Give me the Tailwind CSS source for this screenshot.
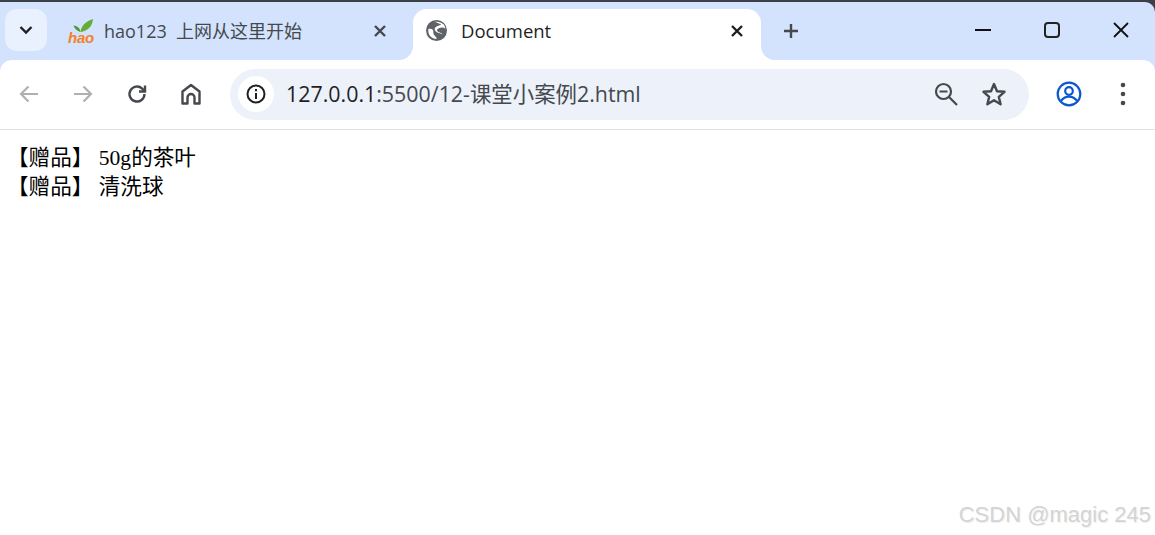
<!DOCTYPE html>
<html lang="zh">
<head>
<meta charset="utf-8">
<title>Document</title>
<script src="https://cdn.jsdelivr.net/npm/@tailwindcss/browser@4"></script>
</head>
<body class="bg-white overflow-hidden">
<div class="relative w-[1155px] h-[535px] overflow-hidden bg-white font-['Open_Sans','Noto_Sans_CJK_SC',sans-serif]">
  <!-- Tab strip -->
  <div class="bg-[#3c3f46] h-[60px] pt-[2px]">
    <div class="h-[58px] bg-[#d3e3fd] rounded-tr-[10px] flex items-start pl-[5px] pt-[7px]">
      <button class="w-[42px] h-[42px] rounded-[12px] bg-[#e9f0fe] flex items-center justify-center shrink-0">
        <svg width="16" height="16" viewBox="0 0 16 16" fill="none" stroke="#1f1f1f" stroke-width="2.400"><path d="M2.500 5 8 10.500 13.500 5"/></svg>
      </button>
      <div class="w-[358px] ml-[8px] h-[44px] flex items-center pl-[13px] pr-[25px] shrink-0">
        <div class="relative w-[26px] h-[26px] shrink-0">
          <svg class="absolute left-0 top-0" width="26" height="18" viewBox="0 0 26 18">
            <path d="M12.500 14C9 13 6.500 10.500 5.500 7.500 9 7.800 12 10 12.500 14Z" fill="#4d9a2e"/>
            <path d="M12.500 14C13 8 18 3 25 1c-.5 7-5 12-12.500 13Z" fill="#66ad34"/>
          </svg>
          <span class="absolute left-0 top-[13px] text-[15px] leading-[14px] italic font-bold tracking-[-0.2px] text-[#f4812a] font-['Liberation_Sans',sans-serif]">hao</span>
        </div>
        <span class="ml-[10px] text-[18px] leading-[24px] text-[#45484d] whitespace-pre flex-1">hao123  上网从这里开始</span>
        <svg class="-ml-[1px] mr-[1px]" width="14" height="14" viewBox="0 0 14 14" fill="none" stroke="#45484d" stroke-width="2.400"><path d="M2 2l10 10M12 2 2 12"/></svg>
      </div>
      <div class="relative w-[348px] h-[51px] bg-white rounded-t-[14px] flex items-center pl-[13px] pr-[17px] pb-[7px] shrink-0">
        <svg width="21" height="21" viewBox="0 0 22 22" class="shrink-0 mb-[2px]"><circle cx="11" cy="11" r="11" fill="#5f6368"/><path d="M9 1.500c3 .2 6 .5 9 2.800 1.500 1.500 2 3 2.200 4.700-1.200-.7-2.500-1.500-4.500-1-2.200.4-3.700 1-4.200 2.300-.4 1.200 1.200 2.100 3 2.800 1.700.7 2.600 1.300 3 2.200-1.300-1-3.500-1.500-5-2-1.800-.7-3.500-2-3.400-3.900.1-2 2-3 3.900-3.500 1.500-.4 2.500-.6 3.200-.8C13.500 3.500 11 2.300 9 1.500ZM2.500 9.500c1.200-.5 3.300-.6 4.300.5 1.300 1.300.6 2.700 1 4.200.4 1.600 1.400 2.500 2.400 3.300.6.500 1 1.400 1 2.500-3-.2-6-1.500-7.700-4.300-1-1.800-1.300-4.200-1-6.200Z" fill="#fff"/></svg>
        <span class="ml-[14px] text-[18.500px] leading-[24px] text-[#1f1f1f] flex-1">Document</span>
        <svg width="14" height="14" viewBox="0 0 14 14" fill="none" stroke="#1f1f1f" stroke-width="2.400"><path d="M2 2l10 10M12 2 2 12"/></svg>
        <span class="absolute left-[-14px] bottom-0 w-[14px] h-[14px] bg-white"><span class="block w-full h-full bg-[#d3e3fd] rounded-br-[14px]"></span></span>
        <span class="absolute right-[-14px] bottom-0 w-[14px] h-[14px] bg-white"><span class="block w-full h-full bg-[#d3e3fd] rounded-bl-[14px]"></span></span>
      </div>
      <button class="ml-[20px] mt-[12px] w-[20px] h-[20px] flex items-center justify-center shrink-0">
        <svg width="16" height="16" viewBox="0 0 16 16" fill="none" stroke="#45484d" stroke-width="2.400"><path d="M8 1v14M1 8h14"/></svg>
      </button>
      <div class="ml-auto flex items-start shrink-0 pr-[26px] pt-[13px] gap-[53px]">
        <svg width="16" height="16" viewBox="0 0 16 16" fill="none" stroke="#111" stroke-width="2"><path d="M0 8h16"/></svg>
        <svg width="16" height="16" viewBox="0 0 16 16" fill="none" stroke="#222" stroke-width="2"><rect x="1" y="1" width="14" height="14" rx="3"/></svg>
        <svg width="16" height="16" viewBox="0 0 16 16" fill="none" stroke="#111" stroke-width="1.800"><path d="M1 1l14 14M15 1 1 15"/></svg>
      </div>
    </div>
  </div>
  <!-- Toolbar -->
  <div class="bg-[#d3e3fd]">
    <div class="h-[70px] bg-white rounded-t-[12px] border-b border-[#e0e0e0] flex items-center pb-[1px] pl-[18px]">
      <svg width="22" height="22" viewBox="0 0 22 22" fill="none" stroke="#aeb0b3" stroke-width="2.200"><path d="M20 11H3M10.500 3.500 3 11l7.500 7.500"/></svg>
      <svg class="ml-[32px]" width="22" height="22" viewBox="0 0 22 22" fill="none" stroke="#aeb0b3" stroke-width="2.200"><path d="M2 11h17M11.500 3.500 19 11l-7.500 7.500"/></svg>
      <svg class="ml-[32px]" width="22" height="22" viewBox="0 0 22 22" fill="none" stroke="#45484d" stroke-width="2.400"><path d="M18.500 11a7.500 7.500 0 1 1-2.300-5.400L18.500 8"/><path d="M19 2.500V8.500h-6"/></svg>
      <svg class="ml-[32px]" width="22" height="22" viewBox="0 0 22 22" fill="none" stroke="#45484d" stroke-width="2.400" stroke-linejoin="round"><path d="M2.500 20.500V8.500L11 2l8.500 6.500v12h-5v-6a3.500 3.500 0 0 0-7 0v6Z"/></svg>
      <div class="ml-[28px] w-[799px] h-[51px] rounded-full bg-[#ecf1fa] flex items-center pl-[8px] pr-[22px]">
        <div class="w-[36px] h-[36px] rounded-full bg-white flex items-center justify-center shrink-0">
          <svg width="20" height="20" viewBox="0 0 20 20" fill="none" stroke="#1f1f1f" stroke-width="2"><circle cx="10" cy="10" r="8.500"/><path d="M10 9v6M10 5v2.200"/></svg>
        </div>
        <span class="ml-[12px] text-[21.400px] leading-[28px] text-[#45484d] flex-1 whitespace-nowrap"><span class="text-[#1f1f1f]">127.0.0.1</span>:5500/12-课堂小案例2.html</span>
        <svg width="24" height="24" viewBox="0 0 24 24" fill="none" stroke="#45484d" stroke-width="2.200"><circle cx="9.500" cy="9.500" r="7.500"/><path d="M5.500 9.500h8M15 15l8 8"/></svg>
        <svg class="ml-[23px]" width="26" height="26" viewBox="0 0 26 26" fill="none" stroke="#45484d" stroke-width="2.400" stroke-linejoin="round"><path d="m13 3 3 7.200 7.500.6-5.700 5 1.800 7.500L13 19.300l-6.600 4 1.800-7.500-5.700-5 7.500-.6Z"/></svg>
      </div>
      <svg class="ml-[27px]" width="26" height="26" viewBox="0 0 26 26" fill="none" stroke="#0b57d0" stroke-width="2.200"><circle cx="13" cy="13" r="11.300"/><circle cx="13" cy="10" r="3.800"/><path d="M5 20c2-3 5-4.300 8-4.300s6 1.300 8 4.300"/></svg>
      <svg class="ml-[38px]" width="6" height="24" viewBox="0 0 6 24" fill="#45484d"><circle cx="3" cy="3" r="2.300"/><circle cx="3" cy="12" r="2.300"/><circle cx="3" cy="21" r="2.300"/></svg>
    </div>
  </div>
  <!-- Page -->
  <div class="pl-[7px] pt-[14px] text-[21.600px] leading-[29px] text-black font-['Liberation_Serif','Noto_Sans_CJK_SC',serif]">
    <div>【赠品】 50g的茶叶</div>
    <div>【赠品】 清洗球</div>
  </div>
  <div class="absolute right-[4px] bottom-[6px] text-[22px] leading-[28px] text-[#d4d4d4] [text-shadow:1px_1px_1px_#eeeeee] font-['Liberation_Sans',sans-serif]">CSDN @magic 245</div>
</div>
</body>
</html>
